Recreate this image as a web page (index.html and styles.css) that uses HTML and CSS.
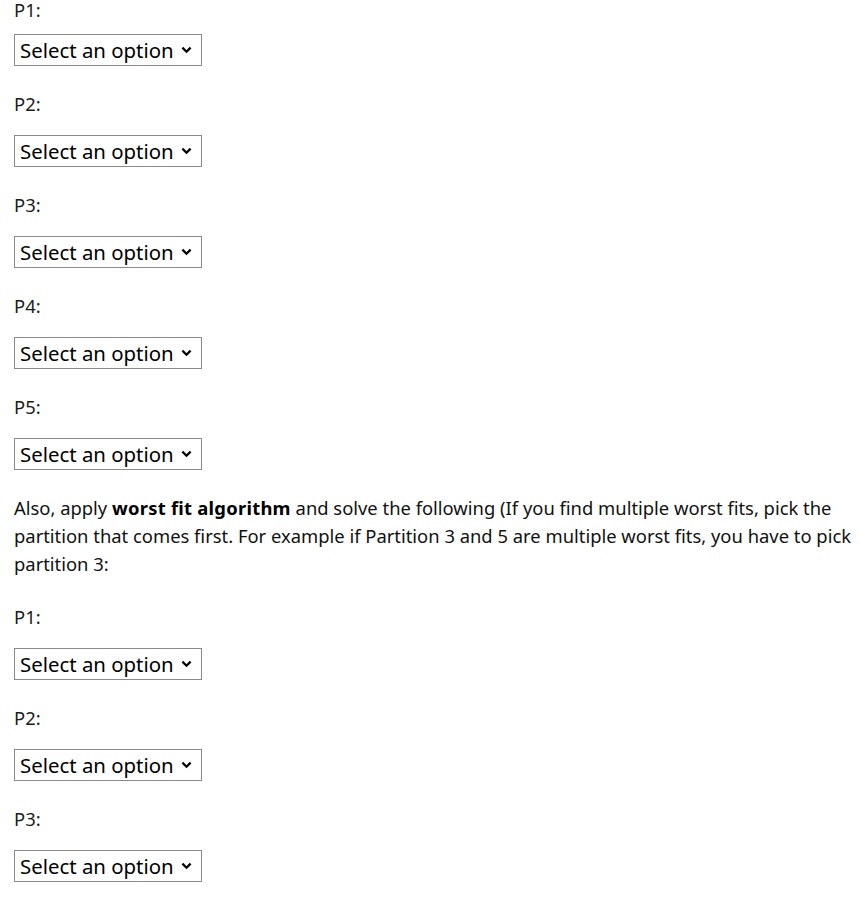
FILE: index.html
```html
<!DOCTYPE html>
<html lang="en">
<head>
<meta charset="utf-8">
<title>Partitions</title>
<link rel="stylesheet" href="styles.css">
</head>
<body>
<div class="page">
  <div class="group">
    <div class="field field-first"><label class="label" for="a1">P1:</label><span class="pick"><select class="picker" id="a1"><option>Select an option</option></select><svg class="chev" width="11" height="8" viewBox="0 0 11 8"><path d="M1.4 1.6 L5.5 5.7 L9.6 1.6" fill="none" stroke="#000" stroke-width="2.3"/></svg></span></div>
    <div class="field"><label class="label" for="a2">P2:</label><span class="pick"><select class="picker" id="a2"><option>Select an option</option></select><svg class="chev" width="11" height="8" viewBox="0 0 11 8"><path d="M1.4 1.6 L5.5 5.7 L9.6 1.6" fill="none" stroke="#000" stroke-width="2.3"/></svg></span></div>
    <div class="field"><label class="label" for="a3">P3:</label><span class="pick"><select class="picker" id="a3"><option>Select an option</option></select><svg class="chev" width="11" height="8" viewBox="0 0 11 8"><path d="M1.4 1.6 L5.5 5.7 L9.6 1.6" fill="none" stroke="#000" stroke-width="2.3"/></svg></span></div>
    <div class="field"><label class="label" for="a4">P4:</label><span class="pick"><select class="picker" id="a4"><option>Select an option</option></select><svg class="chev" width="11" height="8" viewBox="0 0 11 8"><path d="M1.4 1.6 L5.5 5.7 L9.6 1.6" fill="none" stroke="#000" stroke-width="2.3"/></svg></span></div>
    <div class="field"><label class="label" for="a5">P5:</label><span class="pick"><select class="picker" id="a5"><option>Select an option</option></select><svg class="chev" width="11" height="8" viewBox="0 0 11 8"><path d="M1.4 1.6 L5.5 5.7 L9.6 1.6" fill="none" stroke="#000" stroke-width="2.3"/></svg></span></div>
  </div>
  <p class="intro">Also, apply <strong>worst fit algorithm</strong> and solve the following (If you find multiple worst fits, pick the partition that comes first. For example if Partition 3 and 5 are multiple worst fits, you have to pick partition 3:</p>
  <div class="group">
    <div class="field"><label class="label" for="b1">P1:</label><span class="pick"><select class="picker" id="b1"><option>Select an option</option></select><svg class="chev" width="11" height="8" viewBox="0 0 11 8"><path d="M1.4 1.6 L5.5 5.7 L9.6 1.6" fill="none" stroke="#000" stroke-width="2.3"/></svg></span></div>
    <div class="field"><label class="label" for="b2">P2:</label><span class="pick"><select class="picker" id="b2"><option>Select an option</option></select><svg class="chev" width="11" height="8" viewBox="0 0 11 8"><path d="M1.4 1.6 L5.5 5.7 L9.6 1.6" fill="none" stroke="#000" stroke-width="2.3"/></svg></span></div>
    <div class="field"><label class="label" for="b3">P3:</label><span class="pick"><select class="picker" id="b3"><option>Select an option</option></select><svg class="chev" width="11" height="8" viewBox="0 0 11 8"><path d="M1.4 1.6 L5.5 5.7 L9.6 1.6" fill="none" stroke="#000" stroke-width="2.3"/></svg></span></div>
  </div>
</div>
</body>
</html>
```
FILE: styles.css
```css
html, body {
  margin: 0;
  padding: 0;
  background: #ffffff;
}
body {
  font-family: "Noto Sans", "Open Sans", sans-serif;
  color: #1b1b1b;
}
.page {
  padding: 0 4px 0 14px;
}
.group {
  display: flex;
  flex-direction: column;
  gap: 25px;
}
.field {
  display: flex;
  flex-direction: column;
  align-items: flex-start;
  gap: 18px;
}
.label {
  font-size: 18.4px;
  line-height: 26px;
}
.field-first {
  gap: 14px;
}
.field-first .label {
  line-height: 20px;
}
.pick {
  position: relative;
  display: inline-block;
  line-height: 0;
}
.picker {
  -webkit-appearance: none;
  appearance: none;
  font-family: "Noto Sans", "Open Sans", sans-serif;
  font-size: 20.4px;
  line-height: 30px;
  color: #000;
  width: 188px;
  height: 32px;
  margin: 0;
  padding: 0 22px 0 5px;
  border: 1px solid #8a8a8a;
  border-radius: 0;
  background-color: #fff;
}
.chev {
  position: absolute;
  right: 10px;
  top: 12px;
  pointer-events: none;
}
.intro {
  font-size: 18.4px;
  line-height: 28px;
  margin: 24px 0 26px;
  color: #111;
}
.intro strong {
  font-weight: 700;
  letter-spacing: 0.25px;
  color: #000;
}
```
